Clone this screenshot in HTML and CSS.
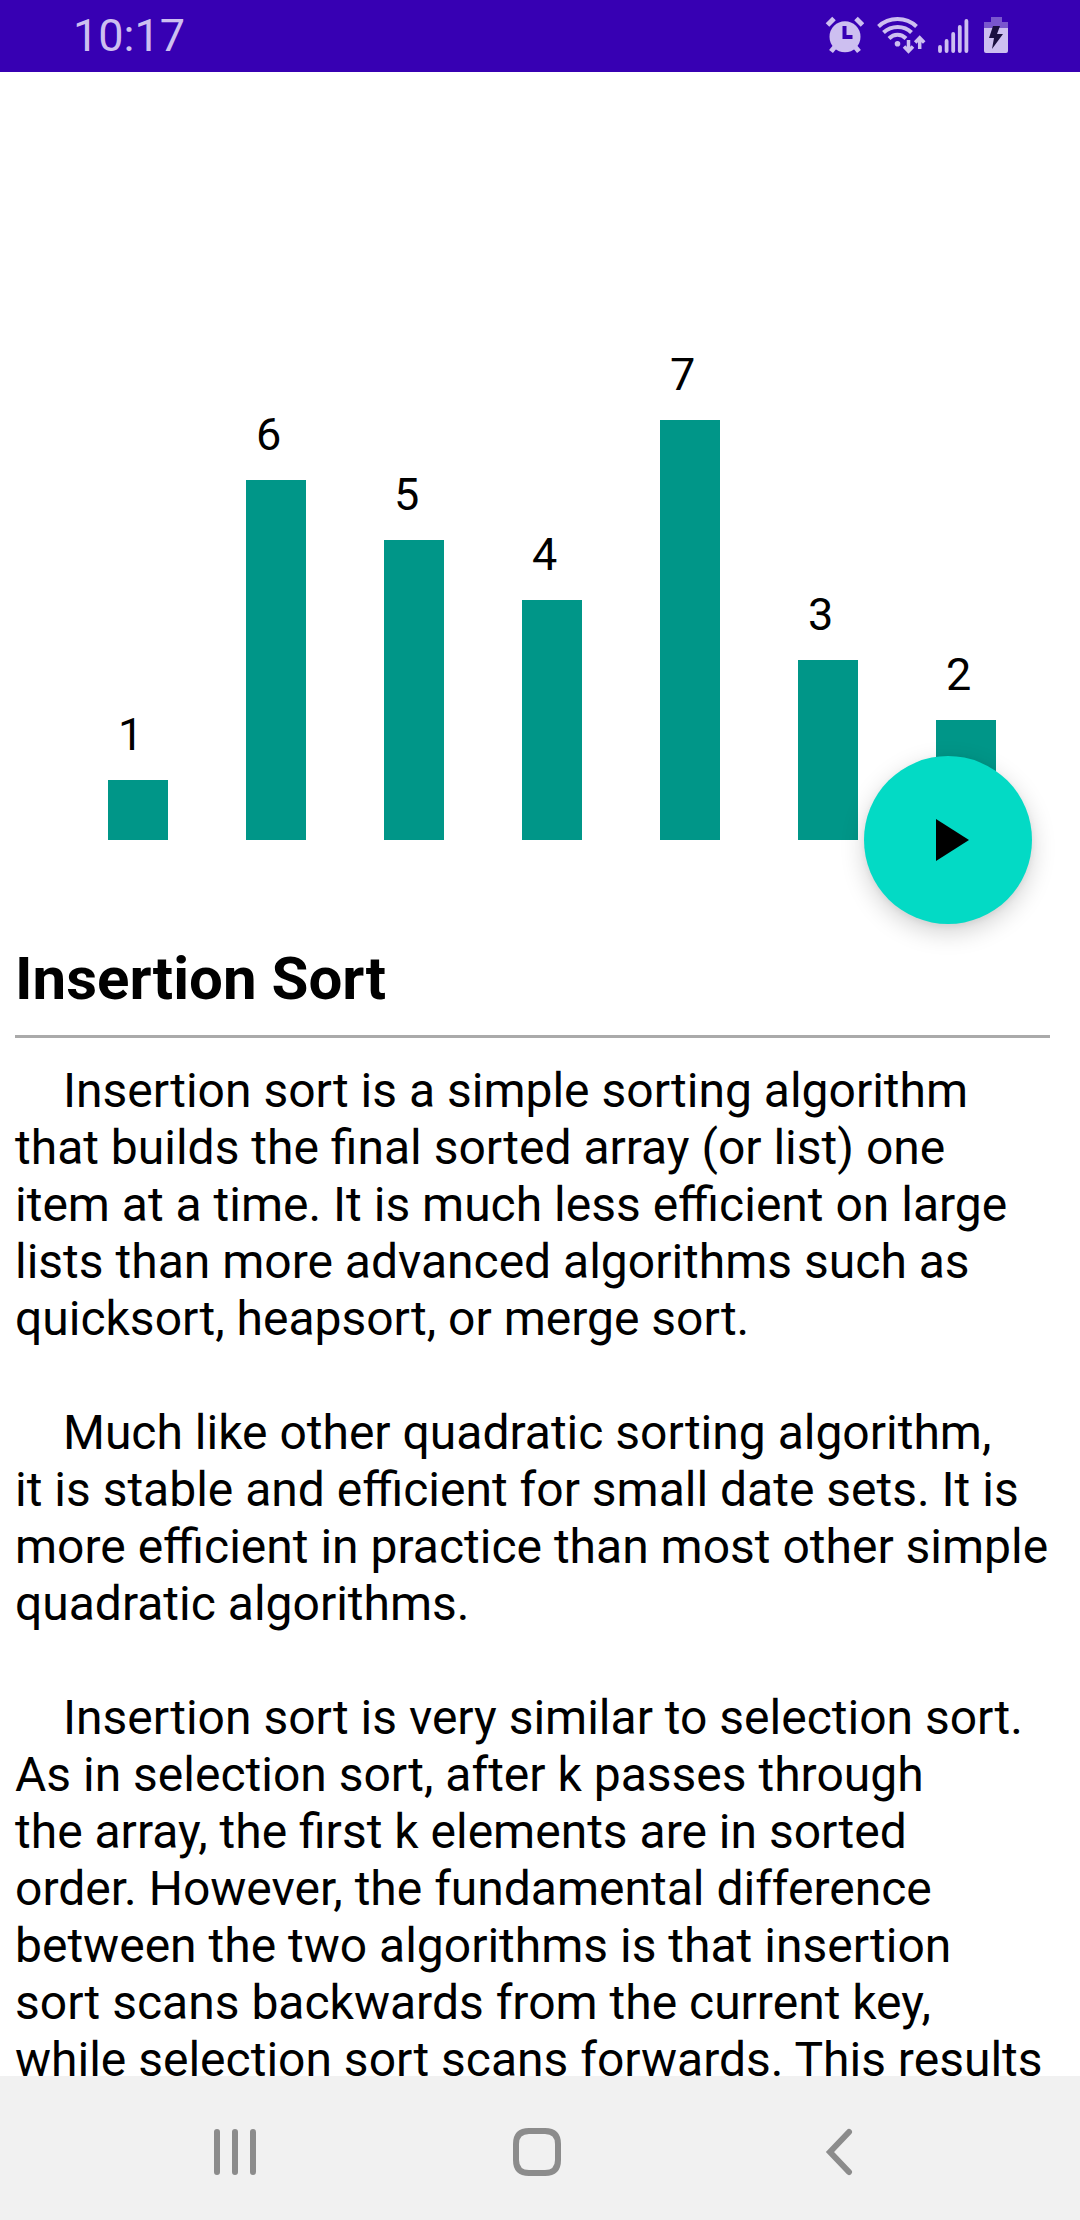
FILE: index.html
```html
<!DOCTYPE html>
<html lang="en">
<head>
<meta charset="utf-8">
<meta name="viewport" content="width=device-width, initial-scale=1">
<title>Insertion Sort</title>
<link rel="stylesheet" href="styles.css">
</head>
<body>
<div class="screen">
  <header class="status">
    <time class="clock">10:17</time>
    <div class="status-icons">
      <svg width="40" height="40" viewBox="0 0 40 40" aria-label="Alarm">
        <circle cx="21" cy="20.700" r="15.500" fill="currentColor"/>
        <path d="M3.500 9L10 2.500M38.500 9L32 2.500" stroke="currentColor" stroke-width="5"/>
        <path d="M12 29.500l-5 6M30 29.500l5 6" stroke="currentColor" stroke-width="5"/>
        <path d="M20.500 10v11h8" fill="none" stroke="#3700b3" stroke-width="4"/>
      </svg>
      <svg width="50" height="40" viewBox="0 0 50 40" aria-label="Wi-Fi">
        <g fill="none" stroke="currentColor" stroke-width="4">
          <path d="M2.500 10.500C13 .5 30 .5 40.500 10.500"/>
          <path d="M7.500 16.500C15.500 9 28 9 35.500 16.500"/>
          <path d="M13 22.500C18 17.500 25 17.500 30 22.500"/>
        </g>
        <circle cx="21.500" cy="27.700" r="2.800" fill="currentColor"/>
        <path d="M32.500 24v11M28 30.500l4.500 4.700 4.500-4.700M43.700 33v-11M39.200 26.500l4.500-4.700 4.500 4.700" fill="none" stroke="currentColor" stroke-width="3.500"/>
      </svg>
      <svg width="34" height="40" viewBox="0 0 34 40" aria-label="Signal">
        <path d="M2 31v4M8.600 25v10M15.200 18v17M21.800 11v24M28.400 5v30" stroke="currentColor" stroke-width="3.800" stroke-linecap="round"/>
      </svg>
      <svg width="24" height="40" viewBox="0 0 24 40" aria-label="Battery charging">
        <path d="M7 1h11v5h6v6H0V6h7z" fill="currentColor" opacity=".45"/>
        <path d="M0 12h24v23a2 2 0 0 1-2 2H2a2 2 0 0 1-2-2z" fill="currentColor"/>
        <path d="M9 10h7l-3 8h6L8 33l2-11H5z" fill="#1b0f3f"/>
      </svg>
    </div>
  </header>

  <main class="content">
    <section class="chart" aria-label="Array values">
      <div class="column"><span class="value">1</span><div class="bar" style="height:60px"></div></div>
      <div class="column"><span class="value">6</span><div class="bar" style="height:360px"></div></div>
      <div class="column"><span class="value">5</span><div class="bar" style="height:300px"></div></div>
      <div class="column"><span class="value">4</span><div class="bar" style="height:240px"></div></div>
      <div class="column"><span class="value">7</span><div class="bar" style="height:420px"></div></div>
      <div class="column"><span class="value">3</span><div class="bar" style="height:180px"></div></div>
      <div class="column"><span class="value">2</span><div class="bar" style="height:120px"></div></div>
      <button class="play" type="button" aria-label="Play">
        <svg width="72" height="72" viewBox="0 0 24 24"><path d="M8 5v14l11-7z"/></svg>
      </button>
    </section>

    <article class="article">
      <h1 class="title">Insertion Sort</h1>
      <p>Insertion sort is a simple sorting algorithm<br>
      that builds the final sorted array (or list) one<br>
      item at a time. It is much less efficient on large<br>
      lists than more advanced algorithms such as<br>
      quicksort, heapsort, or merge sort.</p>
      <p>Much like other quadratic sorting algorithm,<br>
      it is stable and efficient for small date sets. It is<br>
      more efficient in practice than most other simple<br>
      quadratic algorithms.</p>
      <p>Insertion sort is very similar to selection sort.<br>
      As in selection sort, after k passes through<br>
      the array, the first k elements are in sorted<br>
      order. However, the fundamental difference<br>
      between the two algorithms is that insertion<br>
      sort scans backwards from the current key,<br>
      while selection sort scans forwards. This results</p>
    </article>
  </main>

  <nav class="navbar">
    <button type="button" aria-label="Recent apps">
      <svg width="48" height="48" viewBox="0 0 48 48"><path d="M6 4v40M24 4v40M42 4v40"/></svg>
    </button>
    <button type="button" aria-label="Home">
      <svg width="48" height="48" viewBox="0 0 48 48"><path d="M16 3h16q13 0 13 13v16q0 13-13 13H16Q3 45 3 32V16Q3 3 16 3z"/></svg>
    </button>
    <button type="button" aria-label="Back">
      <svg width="48" height="48" viewBox="0 0 48 48"><path d="M34 4L15 24l19 20"/></svg>
    </button>
  </nav>
</div>
</body>
</html>
```
FILE: styles.css
```css
* {
  box-sizing: border-box;
}

body {
  margin: 0;
  background: #fff;
  color: #000;
  font-family: Roboto, "Liberation Sans", sans-serif;
}

button {
  padding: 0;
  border: 0;
  background: none;
}

svg {
  display: block;
}

.screen {
  display: flex;
  flex-direction: column;
  height: 100vh;
}

/* Status bar */
.status {
  display: flex;
  flex: none;
  align-items: center;
  justify-content: space-between;
  height: 72px;
  padding: 0 72px 0 73px;
  background: #3700b3;
  color: #cdbff0;
}

.clock {
  font-size: 45px;
  line-height: 54px;
}

.status-icons {
  display: flex;
  gap: 12px;
}

/* Scrolling content */
.content {
  flex: 1;
  min-height: 0;
  overflow-y: auto;
  scrollbar-width: none;
}

.chart {
  position: relative;
  display: flex;
  align-items: flex-end;
  justify-content: space-between;
  padding: 276px 84px 104px 108px;
}

.column {
  width: 60px;
}

.value {
  display: block;
  margin-bottom: 18px;
  padding-left: 10px;
  font-size: 45px;
  line-height: 54px;
}

.bar {
  background: #009688;
}

.play {
  position: absolute;
  right: 48px;
  bottom: 20px;
  display: grid;
  place-items: center;
  width: 168px;
  height: 168px;
  border-radius: 50%;
  background: #03dac5;
  box-shadow: 0 8px 24px rgba(0, 0, 0, 0.18), 0 2px 6px rgba(0, 0, 0, 0.06);
}

.article {
  padding: 0 30px 0 15px;
}

.title {
  margin: 0 0 24px;
  padding-bottom: 21px;
  border-bottom: 3px solid #aaa;
  font-size: 60px;
  line-height: 70px;
}

.article p {
  margin: 0 0 57px;
  font-size: 48px;
  line-height: 57px;
  text-indent: 48px;
}

.article p:last-child {
  margin: 0;
}

/* System navigation */
.navbar {
  display: flex;
  flex: none;
  align-items: center;
  height: 144px;
  padding: 8px 90px 0 84px;
  background: #f1f1f1;
}

.navbar button {
  display: grid;
  flex: 1;
  place-items: center;
  height: 96px;
}

.navbar path {
  fill: none;
  stroke: #8c8c8c;
  stroke-width: 6px;
  stroke-linecap: round;
}
```
